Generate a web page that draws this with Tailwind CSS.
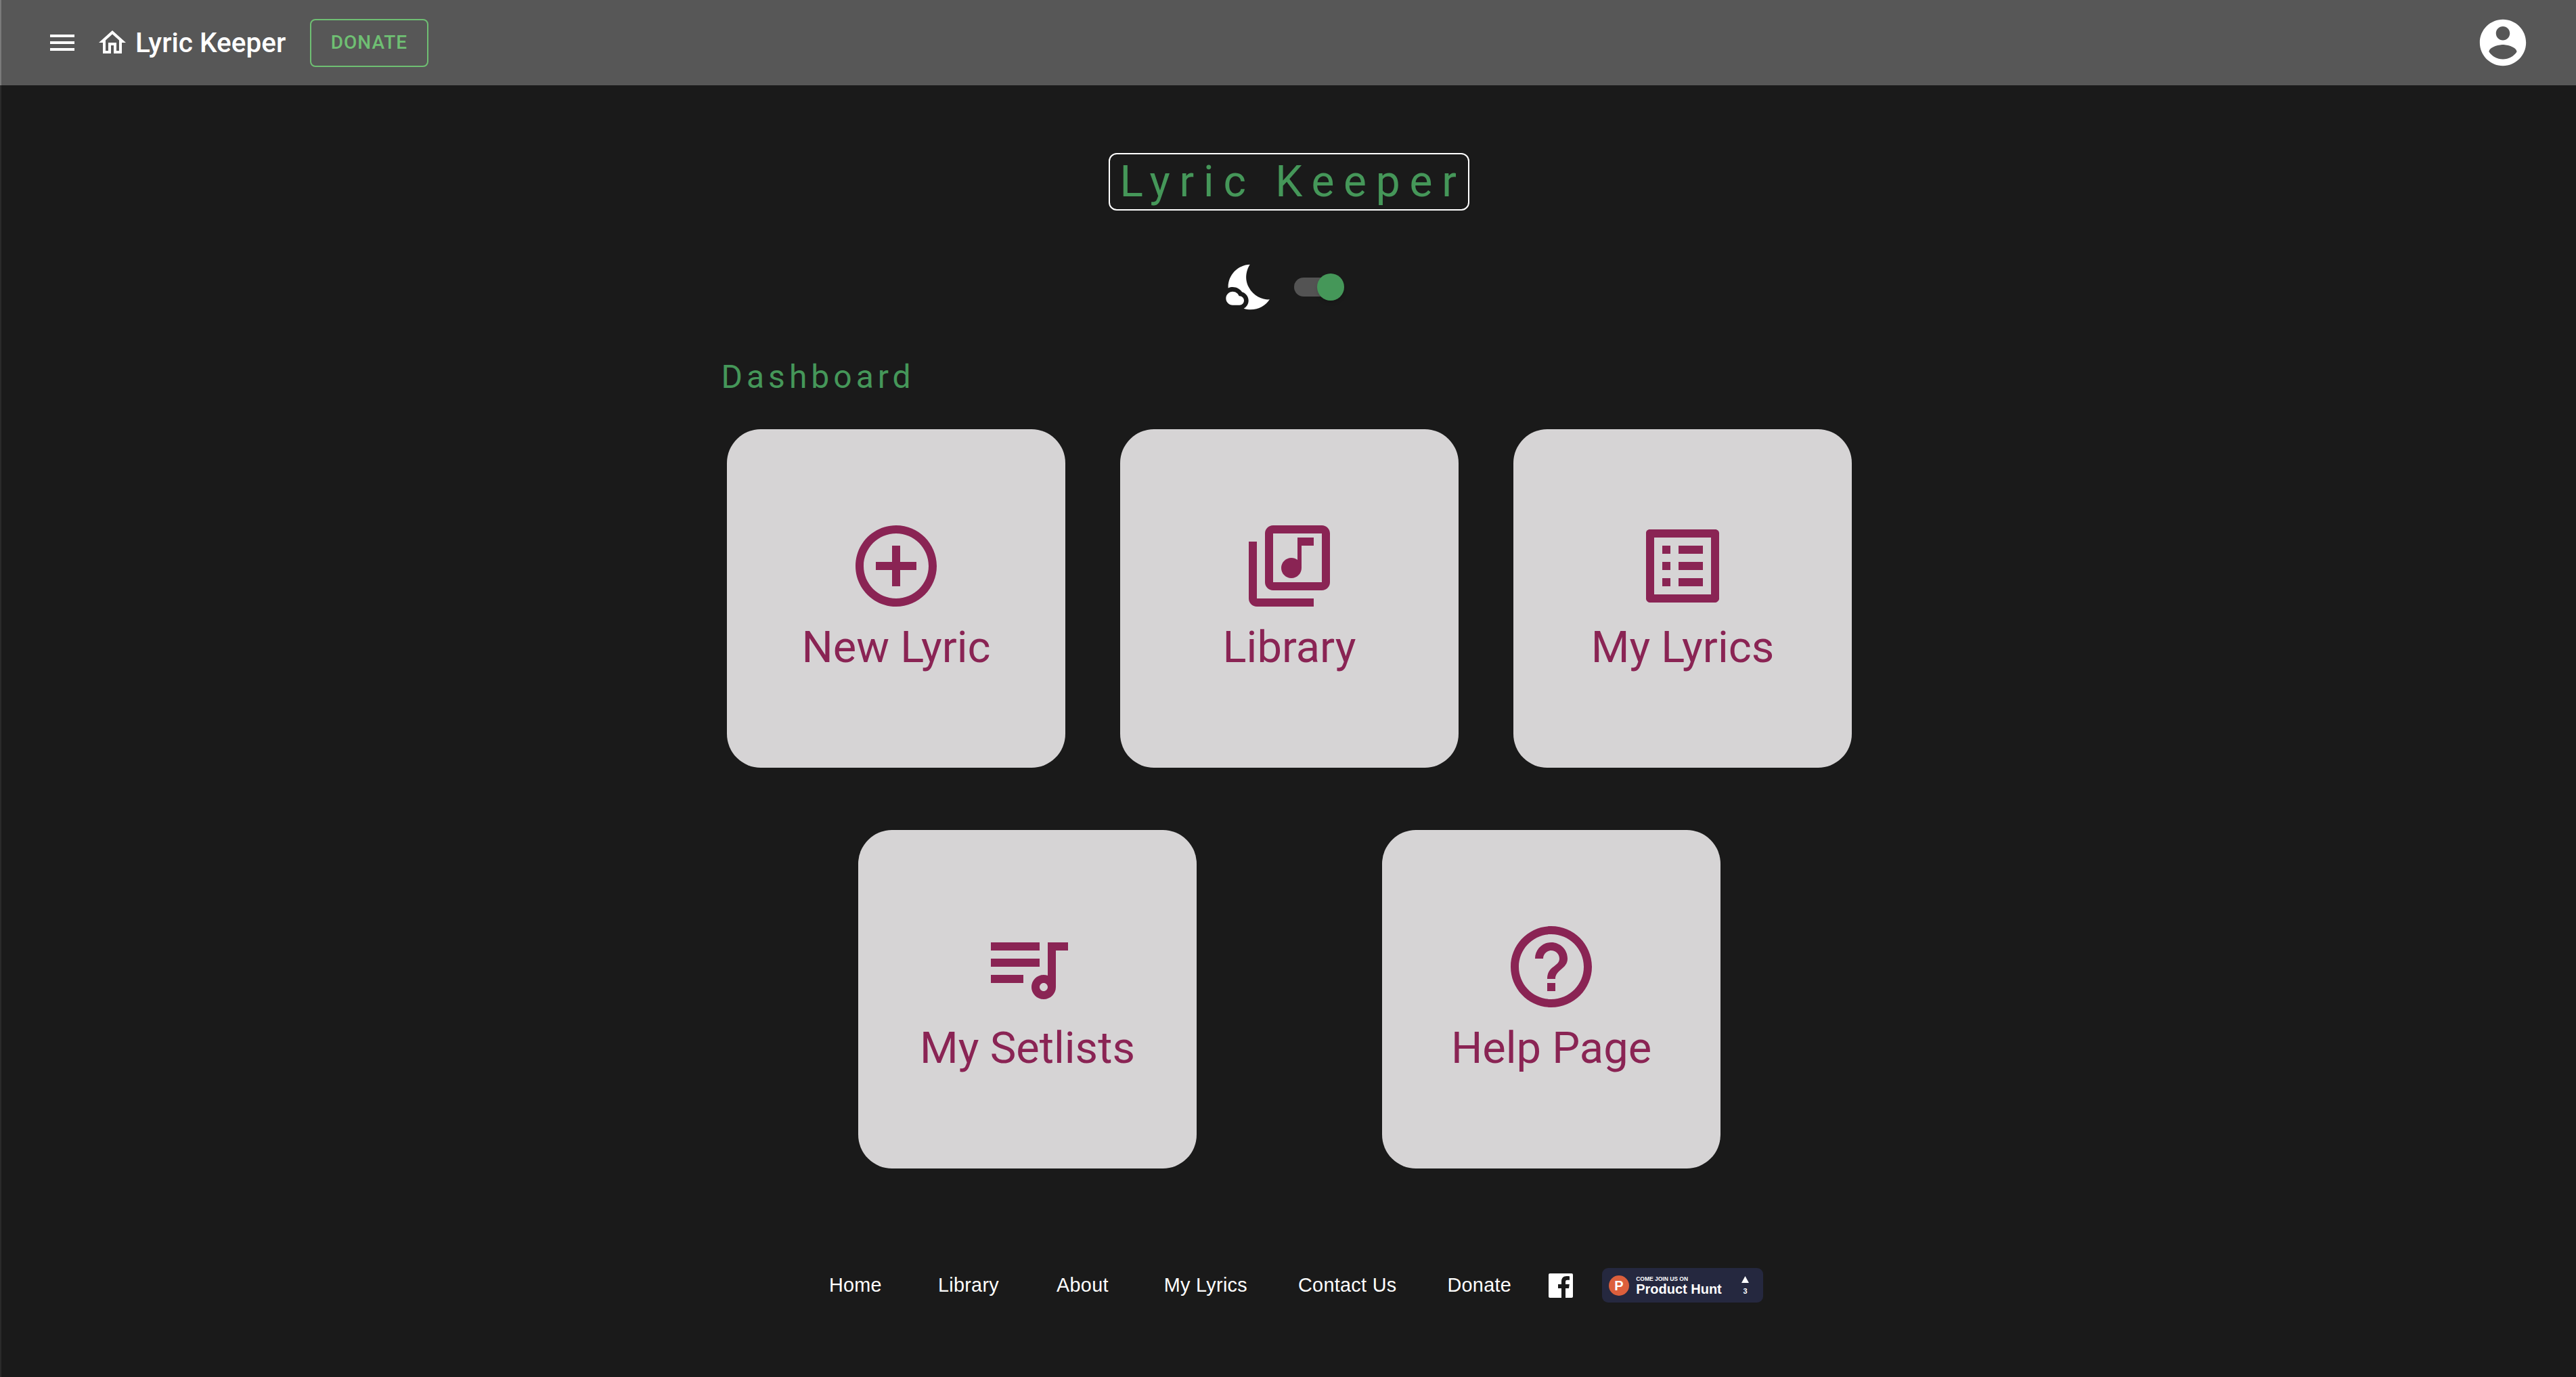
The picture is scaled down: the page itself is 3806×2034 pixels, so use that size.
<!DOCTYPE html>
<html lang="en">
<head>
  <meta charset="UTF-8" />
  <title>Lyric Keeper</title>
  <script src="https://cdn.jsdelivr.net/npm/@tailwindcss/browser@4"></script>
</head>
<body class="bg-[#1a1a1a] font-['Roboto',sans-serif]">
<div class="h-[2034px] overflow-hidden flex flex-col">

  <header class="h-[126px] shrink-0 bg-[#575757] border-l-2 border-[#7a7a7a] flex items-center pl-[66px] pr-[67px] text-white">
    <svg class="w-12 h-12 fill-white" viewBox="0 0 24 24"><path d="M3 18h18v-2H3v2zm0-5h18v-2H3v2zm0-7v2h18V6H3z"/></svg>
    <svg class="w-12 h-12 fill-white ml-[26px]" viewBox="0 0 24 24"><path d="M12 5.69l5 4.5V18h-2v-6H9v6H7v-7.81l5-4.5M12 3L2 12h3v8h6v-6h2v6h6v-8h3L12 3z"/></svg>
    <span class="w-[224px] text-[40.5px] font-medium ml-[10px] leading-none">Lyric Keeper</span>
    <a class="ml-[34px] w-[175px] h-[71px] border-2 border-[#6fbf73] rounded-lg flex items-center justify-center text-[#6fbf73] text-[28px] font-medium tracking-[1px]">DONATE</a>
    <svg class="ml-auto w-[82px] h-[82px] fill-white" viewBox="0 0 24 24"><path d="M12 2C6.48 2 2 6.48 2 12s4.48 10 10 10 10-4.48 10-10S17.52 2 12 2zm0 3c1.66 0 3 1.34 3 3s-1.34 3-3 3-3-1.34-3-3 1.34-3 3-3zm0 14.2c-2.5 0-4.71-1.28-6-3.22.03-1.99 4-3.08 6-3.08 1.99 0 5.97 1.09 6 3.08-1.29 1.94-3.5 3.22-6 3.22z"/></svg>
  </header>

  <main class="flex-1 border-l-2 border-[#2a2a2a] flex flex-col items-center pt-[100px]">
    <h1 class="w-[533px] h-[85px] border-2 border-white rounded-xl flex items-center pl-[15px] text-[64px] leading-none tracking-[0.215em] text-[#459759] whitespace-nowrap">Lyric Keeper</h1>

    <div class="flex items-center mt-[73px] h-[80px] ml-[-20px]">
      <svg class="w-[80px] h-[80px] fill-white" viewBox="0 0 24 24"><path d="M11.1 12.08c-2.33-4.51-.5-8.48.53-10.07C6.27 2.2 1.98 6.59 1.98 12c0 .14.02.28.02.42.62-.27 1.29-.42 2-.42 1.66 0 3.18.83 4.1 2.15 1.67.48 2.9 2.02 2.9 3.85 0 1.52-.87 2.83-2.12 3.51.98.32 2.03.5 3.11.5 3.5 0 6.58-1.8 8.37-4.52-2.36.23-6.98-.97-9.26-5.41z"/><path d="M7 16h-.18C6.4 14.84 5.3 14 4 14c-1.66 0-3 1.34-3 3s1.34 3 3 3h3c1.1 0 2-.9 2-2s-.9-2-2-2z"/></svg>
      <div class="relative w-[68px] h-[28px] rounded-full bg-[#535353] ml-[24px]">
        <span class="absolute right-[-6px] top-[-6px] w-10 h-10 rounded-full bg-[#459759] shadow-md"></span>
      </div>
    </div>

    <div class="w-[1668px] mt-[65px] ml-[-9px]">
      <h2 class="text-[48px] leading-[56px] tracking-[0.125em] text-[#459759]">Dashboard</h2>
    </div>

    <div class="flex gap-[81px] mt-[49px] ml-[2px]">
      <a class="w-[500px] h-[500px] rounded-[50px] bg-[#d6d4d5] flex flex-col items-center pt-[130px] text-[#8a2454]">
        <svg class="w-36 h-36 fill-current" viewBox="0 0 24 24"><path d="M13 7h-2v4H7v2h4v4h2v-4h4v-2h-4V7zm-1-5C6.48 2 2 6.48 2 12s4.48 10 10 10 10-4.48 10-10S17.52 2 12 2zm0 18c-4.41 0-8-3.59-8-8s3.59-8 8-8 8 3.59 8 8-3.59 8-8 8z"/></svg>
        <span class="text-[65px] leading-[76px] mt-[10px]">New Lyric</span>
      </a>
      <a class="w-[500px] h-[500px] rounded-[50px] bg-[#d6d4d5] flex flex-col items-center pt-[130px] text-[#8a2454]">
        <svg class="w-36 h-36 fill-current" viewBox="0 0 24 24"><path d="M20 2H8c-1.1 0-2 .9-2 2v12c0 1.1.9 2 2 2h12c1.1 0 2-.9 2-2V4c0-1.1-.9-2-2-2zm0 14H8V4h12v12zm-7.5-1c1.38 0 2.5-1.12 2.5-2.5V7h3V5h-4v5.51c-.42-.32-.93-.51-1.5-.51-1.38 0-2.5 1.12-2.5 2.5s1.12 2.5 2.5 2.5zM4 6H2v14c0 1.1.9 2 2 2h14v-2H4V6z"/></svg>
        <span class="text-[65px] leading-[76px] mt-[10px]">Library</span>
      </a>
      <a class="w-[500px] h-[500px] rounded-[50px] bg-[#d6d4d5] flex flex-col items-center pt-[130px] text-[#8a2454]">
        <svg class="w-36 h-36 fill-current" viewBox="0 0 24 24"><path d="M19 5v14H5V5h14m1.1-2H3.9c-.5 0-.9.4-.9.9v16.2c0 .4.4.9.9.9h16.2c.4 0 .9-.5.9-.9V3.9c0-.5-.5-.9-.9-.9zM11 7h6v2h-6V7zm0 4h6v2h-6v-2zm0 4h6v2h-6zM7 7h2v2H7zm0 4h2v2H7zm0 4h2v2H7z"/></svg>
        <span class="text-[65px] leading-[76px] mt-[10px]">My Lyrics</span>
      </a>
    </div>

    <div class="flex gap-[274px] mt-[92px] ml-[2px]">
      <a class="w-[500px] h-[500px] rounded-[50px] bg-[#d6d4d5] flex flex-col items-center pt-[130px] text-[#8a2454]">
        <svg class="w-36 h-36 fill-current" viewBox="0 0 24 24"><path d="M15 6H3v2h12V6zm0 4H3v2h12v-2zM3 16h8v-2H3v2zM17 6v8.18c-.31-.11-.65-.18-1-.18-1.66 0-3 1.34-3 3s1.34 3 3 3 3-1.34 3-3V8h3V6h-5zm-1 12c-.55 0-1-.45-1-1s.45-1 1-1 1 .45 1 1-.45 1-1 1z"/></svg>
        <span class="text-[65px] leading-[76px] mt-[10px]">My Setlists</span>
      </a>
      <a class="w-[500px] h-[500px] rounded-[50px] bg-[#d6d4d5] flex flex-col items-center pt-[130px] text-[#8a2454]">
        <svg class="w-36 h-36 fill-current" viewBox="0 0 24 24"><path d="M11 18h2v-2h-2v2zm1-16C6.48 2 2 6.48 2 12s4.48 10 10 10 10-4.48 10-10S17.52 2 12 2zm0 18c-4.41 0-8-3.59-8-8s3.59-8 8-8 8 3.59 8 8-3.59 8-8 8zm0-14c-2.21 0-4 1.79-4 4h2c0-1.1.9-2 2-2s2 .9 2 2c0 2-3 1.75-3 5h2c0-2.25 3-2.5 3-5 0-2.21-1.79-4-4-4z"/></svg>
        <span class="text-[65px] leading-[76px] mt-[10px]">Help Page</span>
      </a>
    </div>

    <footer class="flex items-center h-[51px] mt-[147px] ml-[22px] text-white text-[28.8px] tracking-[0.3px] font-['Liberation_Sans',sans-serif]">
      <a>Home</a>
      <a class="ml-[83px]">Library</a>
      <a class="ml-[85px]">About</a>
      <a class="ml-[82px]">My Lyrics</a>
      <a class="ml-[75px]">Contact Us</a>
      <a class="ml-[75px]">Donate</a>
      <svg class="ml-[55px] w-9 h-9" viewBox="0 0 36 36"><rect width="36" height="36" rx="2" fill="#fff"/><path fill="#1a1a1a" d="M25 36V22h5l.8-6H25v-3.5c0-1.7.5-2.8 2.9-2.8H31V4.3c-.5-.1-2.3-.3-4.5-.3-4.4 0-7.5 2.7-7.5 7.7V16h-5v6h5v14z"/></svg>
      <div class="ml-[43px] w-[238px] h-[51px] rounded-[9px] bg-[#25283f] flex items-center pl-[10px]">
        <span class="w-[30px] h-[30px] rounded-full bg-[#dc5f3c] flex items-center justify-center text-[20px] font-bold leading-none">P</span>
        <div class="ml-[10px] w-[156px] flex flex-col font-bold tracking-normal">
          <span class="text-[8.5px] leading-[10px]">COME JOIN US ON</span>
          <span class="text-[20px] leading-[20px]">Product Hunt</span>
        </div>
        <div class="flex flex-col items-center font-bold">
          <svg class="w-[11px] h-[10px] fill-white" viewBox="0 0 11 10"><path d="M5.5 0L11 10H0z"/></svg>
          <span class="text-[11px] leading-[12px] mt-[6px] tracking-normal">3</span>
        </div>
      </div>
    </footer>
  </main>
</div>
</body>
</html>
